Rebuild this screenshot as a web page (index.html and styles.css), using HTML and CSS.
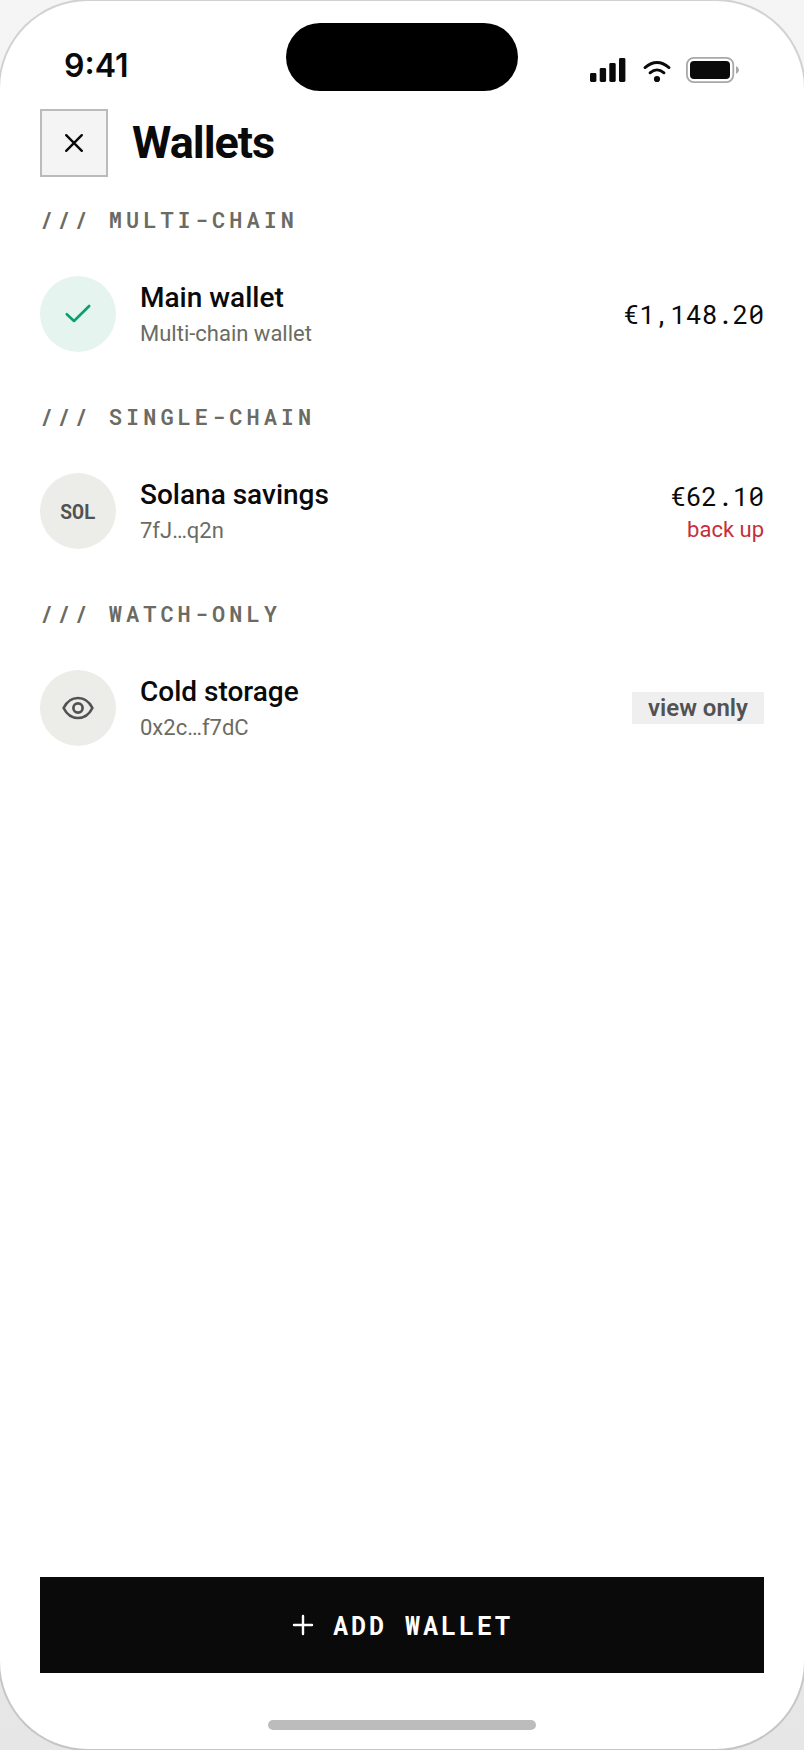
FILE: index.html
```html
<!DOCTYPE html>
<html lang="en">
<head>
    <meta charset="UTF-8">
    <meta name="viewport" content="width=device-width, initial-scale=1.0">
    <title>Wallets</title>
    <link rel="stylesheet" href="styles.css">
</head>
<body>
    <div class="phone">
        <div class="status-bar">
            <div class="status-time">9:41</div>
            <div class="island"></div>
            <div class="status-icons">
                <svg width="36" height="26" viewBox="0 0 36 26" fill="#0a0a0a" aria-hidden="true">
                    <rect x="0" y="16" width="6.4" height="9" rx="1.4"/>
                    <rect x="9.7" y="11" width="6.4" height="14" rx="1.4"/>
                    <rect x="19.3" y="6" width="6.4" height="19" rx="1.4"/>
                    <rect x="29" y="1" width="6.4" height="24" rx="1.4"/>
                </svg>
                <svg width="30" height="26" viewBox="0 0 30 26" fill="none" stroke="#0a0a0a" stroke-width="2.8" stroke-linecap="round" aria-hidden="true">
                    <path d="M4 10.6Q16 0.4 28 10.6"/>
                    <path d="M9 15.8Q16 10 23 15.8"/>
                    <circle cx="16" cy="22" r="3.1" fill="#0a0a0a" stroke="none"/>
                </svg>
                <svg width="54" height="26" viewBox="0 0 54 26" aria-hidden="true">
                    <rect x="0.9" y="0.9" width="46.4" height="24.2" rx="7" fill="none" stroke="#a8a8a8" stroke-width="1.8"/>
                    <rect x="4" y="4" width="40" height="18" rx="4" fill="#0a0a0a"/>
                    <path d="M50 9Q53 10.5 53 13T50 17Z" fill="#a8a8a8"/>
                </svg>
            </div>
        </div>

        <header class="header">
            <button type="button" class="close-button" aria-label="Close">
                <svg width="24" height="24" viewBox="0 0 24 24" fill="none" stroke="#0a0a0a" stroke-width="2.4" stroke-linecap="round">
                    <path d="M4.2 4.2l15.6 15.6M19.8 4.2L4.2 19.8"/>
                </svg>
            </button>
            <h1>Wallets</h1>
        </header>

        <main class="wallets">
            <section>
                <h2 class="section-label">/// MULTI-CHAIN</h2>
                <div class="wallet">
                    <div class="avatar avatar-active">
                        <svg width="32" height="32" viewBox="0 0 32 32" fill="none" stroke="#0a9f6e" stroke-width="2.6" stroke-linecap="round" stroke-linejoin="round">
                            <path d="M4.8 16.2L12 23L27.2 8"/>
                        </svg>
                    </div>
                    <div class="wallet-info">
                        <div class="wallet-name">Main wallet</div>
                        <div class="wallet-sub">Multi-chain wallet</div>
                    </div>
                    <div class="wallet-side">
                        <div class="amount">€1,148.20</div>
                    </div>
                </div>
            </section>

            <section>
                <h2 class="section-label">/// SINGLE-CHAIN</h2>
                <div class="wallet">
                    <div class="avatar">SOL</div>
                    <div class="wallet-info">
                        <div class="wallet-name">Solana savings</div>
                        <div class="wallet-sub">7fJ…q2n</div>
                    </div>
                    <div class="wallet-side wallet-side-stacked">
                        <div class="amount">€62.10</div>
                        <a href="#" class="backup-link">back up</a>
                    </div>
                </div>
            </section>

            <section>
                <h2 class="section-label">/// WATCH-ONLY</h2>
                <div class="wallet">
                    <div class="avatar">
                        <svg width="32" height="32" viewBox="0 0 32 32" fill="none" stroke="#525252" stroke-width="2.7" stroke-linejoin="round">
                            <path d="M1.6 16C5 9.2 10 6 16 6s11 3.2 14.4 10C27 22.8 22 26 16 26S5 22.8 1.6 16Z"/>
                            <circle cx="16" cy="16" r="4.6"/>
                        </svg>
                    </div>
                    <div class="wallet-info">
                        <div class="wallet-name">Cold storage</div>
                        <div class="wallet-sub">0x2c…f7dC</div>
                    </div>
                    <div class="wallet-side">
                        <span class="tag">view only</span>
                    </div>
                </div>
            </section>
        </main>

        <footer class="footer">
            <button type="button" class="add-button">
                <svg width="24" height="24" viewBox="0 0 24 24" fill="none" stroke="#fff" stroke-width="2.4" stroke-linecap="round" aria-hidden="true">
                    <path d="M12 3v18M3 12h18"/>
                </svg>
                ADD WALLET
            </button>
            <div class="home-indicator"></div>
        </footer>
    </div>
</body>
</html>
```

FILE: styles.css
```css
* {
    box-sizing: border-box;
}
body {
    margin: 0;
    padding: 1px 0;
    background: linear-gradient(#f5f5f5, #e6e6e6);
    color: #0a0a0a;
    font-family: Roboto, sans-serif;
}
h1,
h2 {
    margin: 0;
}
.phone {
    display: flex;
    flex-direction: column;
    min-height: calc(100vh - 2px);
    padding: 22px 40px 19px;
    background: #fff;
    border-radius: 88px;
    box-shadow: 0 0 0 2px rgba(0, 0, 0, 0.14);
}

/* Status bar */
.status-bar {
    display: grid;
    grid-template-columns: 1fr 232px 1fr;
    align-items: center;
}
.status-time {
    padding: 18px 0 0 24px;
    font-family: Inter, sans-serif;
    font-size: 32px;
    font-weight: 600;
    line-height: 40px;
}
.island {
    height: 68px;
    border-radius: 34px;
    background: #000;
}
.status-icons {
    display: flex;
    justify-content: flex-end;
    gap: 15px;
    padding: 26px 24px 0 0;
}

/* Header */
.header {
    display: flex;
    align-items: center;
    gap: 24px;
    margin: 18px 0 28px;
}
.close-button {
    display: flex;
    align-items: center;
    justify-content: center;
    width: 68px;
    height: 68px;
    padding: 0;
    background: #f4f4f4;
    border: 2px solid #bbb;
    cursor: pointer;
}
.header h1 {
    font-size: 45px;
    font-weight: 700;
    line-height: 52px;
    letter-spacing: -1px;
}

/* Wallet list */
.wallets {
    display: flex;
    flex-direction: column;
    flex: 1;
    gap: 50px;
}
.section-label {
    margin-bottom: 41px;
    color: #6b6b63;
    font-family: "Roboto Mono", "Liberation Mono", monospace;
    font-size: 22px;
    font-weight: 600;
    line-height: 30px;
    letter-spacing: 4px;
}
.wallet {
    display: flex;
    align-items: center;
    gap: 24px;
}
.avatar {
    display: flex;
    align-items: center;
    justify-content: center;
    width: 76px;
    height: 76px;
    border-radius: 50%;
    background: #ecede8;
    color: #525252;
    font-family: "Roboto Mono", "Liberation Mono", monospace;
    font-size: 20px;
    font-weight: 700;
}
.avatar-active {
    background: #e5f4ef;
}
.wallet-info {
    flex: 1;
    padding-top: 2px;
}
.wallet-name {
    font-size: 28px;
    font-weight: 500;
    line-height: 38px;
}
.wallet-sub {
    color: #6b6b63;
    font-size: 22px;
    line-height: 34px;
}
.wallet-side {
    display: flex;
    flex-direction: column;
    align-items: flex-end;
}
.wallet-side-stacked {
    padding-top: 4px;
}
.amount {
    font-family: "Roboto Mono", "Liberation Mono", monospace;
    font-size: 26px;
    line-height: 34px;
}
.backup-link {
    color: #c5303a;
    font-size: 22px;
    line-height: 34px;
    text-decoration: none;
}
.tag {
    padding: 0 16px;
    background: #efefef;
    color: #525252;
    font-size: 24px;
    font-weight: 600;
    line-height: 32px;
}

/* Footer */
.add-button {
    display: flex;
    align-items: center;
    justify-content: center;
    gap: 18px;
    width: 100%;
    height: 96px;
    background: #0a0a0a;
    border: none;
    color: #fff;
    font-family: "Roboto Mono", "Liberation Mono", monospace;
    font-size: 25px;
    font-weight: 700;
    letter-spacing: 3px;
    cursor: pointer;
}
.home-indicator {
    width: 268px;
    height: 10px;
    margin: 47px auto 0;
    border-radius: 5px;
    background: #bcbcbc;
}
```
